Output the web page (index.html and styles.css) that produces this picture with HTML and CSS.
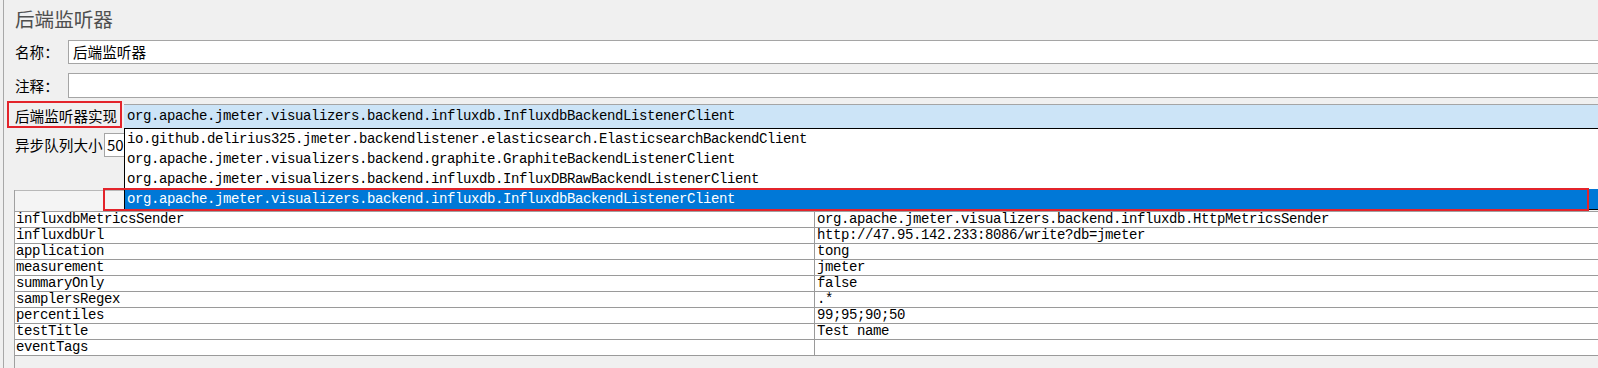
FILE: index.html
```html
<!DOCTYPE html>
<html lang="zh">
<head>
<meta charset="utf-8">
<title>后端监听器</title>
<link rel="stylesheet" href="styles.css">
</head>
<body>
<div class="frame">
  <div class="title">后端监听器</div>
  <div class="row r-name">
    <span class="lbl lbl-short">名称：</span>
    <div class="field">后端监听器</div>
  </div>
  <div class="row r-comment">
    <span class="lbl lbl-short">注释：</span>
    <div class="field"></div>
  </div>
  <div class="row r-impl">
    <span class="lbl lbl-impl">后端监听器实现</span>
    <div class="combo mono">org.apache.jmeter.visualizers.backend.influxdb.InfluxdbBackendListenerClient</div>
  </div>
  <div class="row r-queue">
    <span class="lbl lbl-queue">异步队列大小</span>
    <div class="field field-num">50</div>
  </div>
  <div class="table">
    <div class="thead"><div class="th th-name"></div><div class="th th-value"></div></div>
    <div class="tr"><div class="td c1">influxdbMetricsSender</div><div class="td c2">org.apache.jmeter.visualizers.backend.influxdb.HttpMetricsSender</div></div>
    <div class="tr"><div class="td c1">influxdbUrl</div><div class="td c2">http://47.95.142.233:8086/write?db=jmeter</div></div>
    <div class="tr"><div class="td c1">application</div><div class="td c2">tong</div></div>
    <div class="tr"><div class="td c1">measurement</div><div class="td c2">jmeter</div></div>
    <div class="tr"><div class="td c1">summaryOnly</div><div class="td c2">false</div></div>
    <div class="tr"><div class="td c1">samplersRegex</div><div class="td c2">.*</div></div>
    <div class="tr"><div class="td c1">percentiles</div><div class="td c2">99;95;90;50</div></div>
    <div class="tr"><div class="td c1">testTitle</div><div class="td c2">Test name</div></div>
    <div class="tr"><div class="td c1">eventTags</div><div class="td c2"></div></div>
  </div>

  <div class="dropdown mono">
    <div class="opt">io.github.delirius325.jmeter.backendlistener.elasticsearch.ElasticsearchBackendClient</div>
    <div class="opt">org.apache.jmeter.visualizers.backend.graphite.GraphiteBackendListenerClient</div>
    <div class="opt">org.apache.jmeter.visualizers.backend.influxdb.InfluxDBRawBackendListenerClient</div>
    <div class="opt opt-sel">org.apache.jmeter.visualizers.backend.influxdb.InfluxdbBackendListenerClient</div>
  </div>
  <div class="mark mark-label"></div>
  <div class="mark mark-option"></div>
</div>
</body>
</html>
```

FILE: styles.css
```css
html, body {
  margin: 0;
  padding: 0;
  background: #f0f0f0;
  overflow: hidden;
}

body {
  width: 1598px;
  height: 368px;
  font-family: "Noto Sans CJK SC", "Microsoft YaHei", sans-serif;
  color: #000;
}

.frame {
  position: relative;
  margin-left: 3px;
  border-left: 1px solid #a8a8a8;
  padding-left: 10px;
  width: 1640px;
  height: 368px;
  box-sizing: border-box;
  display: flex;
  flex-direction: column;
}

.mono {
  font-family: "Liberation Mono", "DejaVu Sans Mono", monospace;
  font-size: 14px;
  letter-spacing: -0.4px;
}

.title {
  height: 40px;
  line-height: 38px;
  font-size: 19.6px;
  color: #4f4f4f;
  padding-left: 1px;
}

.row {
  display: flex;
  align-items: center;
}

.lbl {
  font-size: 14.6px;
  padding-left: 1px;
  white-space: nowrap;
  line-height: 20px;
}

.lbl-short { width: 53px; }
.lbl-impl { width: 109px; }
.lbl-queue { width: 89px; }

.r-name { height: 24px; margin-bottom: 9px; }
.r-comment { height: 25px; margin-bottom: 6px; }
.r-impl { height: 24px; margin-bottom: 5px; }
.r-queue { height: 24px; margin-bottom: 33px; }

.field {
  flex: 1;
  align-self: stretch;
  background: #fff;
  border: 1px solid #a5a5a5;
  font-size: 14.6px;
  line-height: 22px;
  padding-left: 4px;
}

.r-comment .field { line-height: 23px; }

.field-num {
  padding-left: 2px;
  font-size: 15px;
}

.combo {
  flex: 1;
  align-self: stretch;
  background: #cce4f7;
  border-top: 1px solid #a5a5a5;
  padding-left: 3px;
  line-height: 23px;
  white-space: nowrap;
}

.table {
  flex: 1;
  margin-left: 0;
  border-left: 1px solid #a0a0a0;
  background: #f0f0f0;
  display: flex;
  flex-direction: column;
}

.thead {
  display: flex;
  height: 22px;
  box-sizing: border-box;
  border-top: 1px solid #b8b8b8;
  border-bottom: 1px solid #a0a0a0;
  background: #f4f4f4;
}

.th-name { width: 799px; border-right: 1px solid #d0d0d0; }
.th-value { flex: 1; }

.tr {
  display: flex;
  height: 16px;
  box-sizing: border-box;
  border-bottom: 1px solid #9a9a9a;
  background: #fff;
  font-family: "Liberation Mono", "DejaVu Sans Mono", monospace;
  font-size: 14px;
  letter-spacing: -0.4px;
  line-height: 15px;
  white-space: nowrap;
}

.td { padding-left: 1px; overflow: hidden; }
.c1 { width: 798px; border-right: 1px solid #9a9a9a; }
.c2 { flex: 1; padding-left: 2px; }

.dropdown {
  position: absolute;
  left: 120px;
  top: 128px;
  width: 1500px;
  background: #fff;
  border: 1px solid #000;
  border-right: none;
  white-space: nowrap;
}

.opt {
  height: 20px;
  line-height: 20px;
  padding-left: 2px;
}

.opt-sel {
  background: #0078d7;
  color: #fff;
}

.mark {
  position: absolute;
  border: 2px solid #e3242b;
  box-sizing: border-box;
}

.mark-label {
  left: 3px;
  top: 101px;
  width: 115px;
  height: 27px;
}

.mark-option {
  left: 99px;
  top: 188px;
  width: 1486px;
  height: 23px;
}
```
